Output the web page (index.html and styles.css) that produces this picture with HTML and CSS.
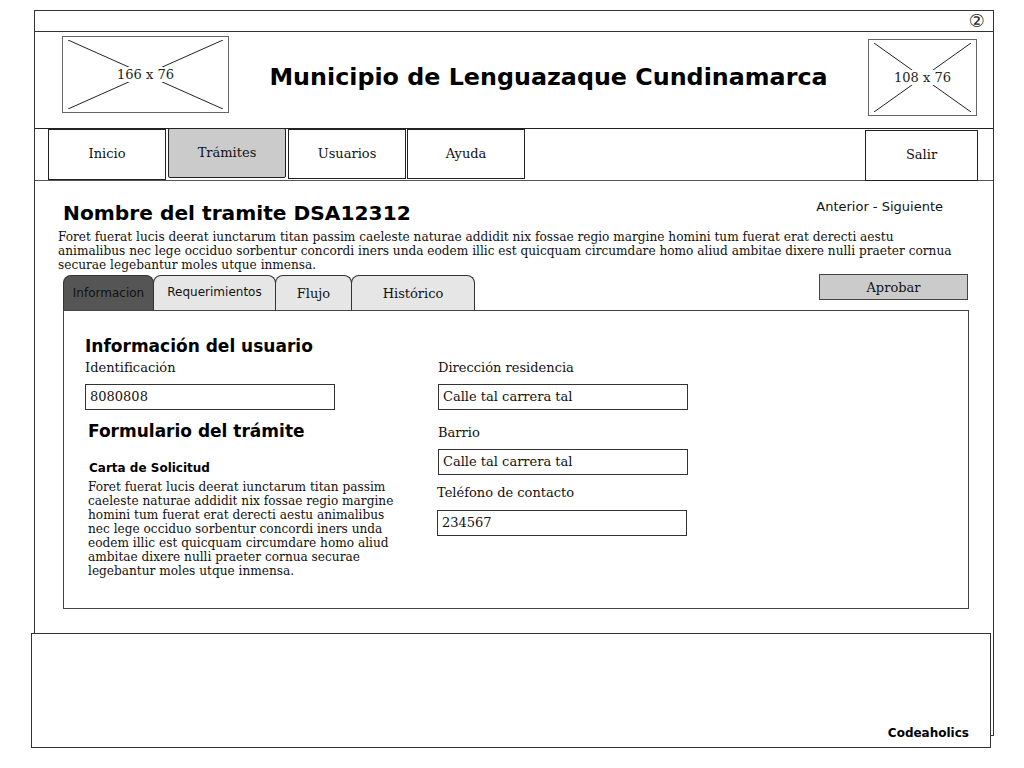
FILE: index.html
```html
<!DOCTYPE html>
<html lang="es">
<head>
<meta charset="utf-8">
<title>Municipio de Lenguazaque Cundinamarca</title>
<link rel="stylesheet" href="styles.css">
</head>
<body>
<div class="page">
  <div class="window">
    <div class="titlebar"><span class="badge">②</span></div>
    <header class="header">
      <div class="ph ph-left">
        <svg class="ph-x" viewBox="0 0 100 100" preserveAspectRatio="none"><line x1="0" y1="0" x2="100" y2="100"/><line x1="100" y1="0" x2="0" y2="100"/></svg>
        <span class="ph-label">166 x 76</span>
      </div>
      <h1 class="site-title">Municipio de Lenguazaque Cundinamarca</h1>
      <div class="ph ph-right">
        <svg class="ph-x" viewBox="0 0 100 100" preserveAspectRatio="none"><line x1="0" y1="0" x2="100" y2="100"/><line x1="100" y1="0" x2="0" y2="100"/></svg>
        <span class="ph-label">108 x 76</span>
      </div>
    </header>
    <nav class="nav">
      <a class="nav-btn nav-low">Inicio</a>
      <a class="nav-btn nav-active">Trámites</a>
      <a class="nav-btn">Usuarios</a>
      <a class="nav-btn nav-ayuda">Ayuda</a>
      <a class="nav-btn nav-exit">Salir</a>
    </nav>
    <main class="main">
      <div class="title-row">
        <h2 class="proc-title">Nombre del tramite DSA12312</h2>
        <span class="pager">Anterior - Siguiente</span>
      </div>
      <p class="intro">Foret fuerat lucis deerat iunctarum titan passim caeleste naturae addidit nix fossae regio margine homini tum fuerat erat derecti aestu animalibus nec lege occiduo sorbentur concordi iners unda eodem illic est quicquam circumdare homo aliud ambitae dixere nulli praeter cornua securae legebantur moles utque inmensa.</p>
      <div class="tab-row">
        <div class="tabs">
          <span class="tab tab-active">Informacion</span>
          <span class="tab tab-sans tab-req">Requerimientos</span>
          <span class="tab tab-flujo">Flujo</span>
          <span class="tab tab-hist">Histórico</span>
        </div>
        <button class="approve">Aprobar</button>
      </div>
      <section class="panel">
        <div class="col col-left">
          <h3 class="sec-title">Información del usuario</h3>
          <label class="lbl">Identificación</label>
          <div class="field">8080808</div>
          <h3 class="sec-title sec-form">Formulario del trámite</h3>
          <h4 class="sub-title">Carta de Solicitud</h4>
          <p class="letter">Foret fuerat lucis deerat iunctarum titan passim caeleste naturae addidit nix fossae regio margine homini tum fuerat erat derecti aestu animalibus nec lege occiduo sorbentur concordi iners unda eodem illic est quicquam circumdare homo aliud ambitae dixere nulli praeter cornua securae legebantur moles utque inmensa.</p>
        </div>
        <div class="col col-right">
          <label class="lbl lbl-dir">Dirección residencia</label>
          <div class="field">Calle tal carrera tal</div>
          <label class="lbl lbl-barrio">Barrio</label>
          <div class="field">Calle tal carrera tal</div>
          <label class="lbl lbl-tel">Teléfono de contacto</label>
          <div class="field field-tel">234567</div>
        </div>
      </section>
    </main>
  </div>
  <footer class="footer"><span class="brand">Codeaholics</span></footer>
</div>
</body>
</html>
```

FILE: styles.css
```css
* { box-sizing: border-box; }
html, body { margin: 0; padding: 0; background: #fff; }
body { font-family: "DejaVu Serif", serif; font-size: 13px; color: #111; }

.page { padding: 10px 0 20px 0; }

.window {
  margin-left: 34px;
  width: 960px;
  height: 726px;
  border: 1px solid #333;
  display: flex;
  flex-direction: column;
}

.titlebar {
  flex: none;
  height: 21px;
  border-bottom: 1px solid #333;
  display: flex;
  justify-content: flex-end;
  align-items: center;
  padding-right: 8px;
}
.badge { font-family: "DejaVu Sans", sans-serif; font-size: 18px; line-height: 1; color: #222; }

.header {
  flex: none;
  height: 96px;
  display: flex;
  align-items: flex-start;
  padding: 4px 16px 0 27px;
}
.ph {
  position: relative;
  border: 1.5px solid #666;
  display: flex;
  align-items: center;
  justify-content: center;
  flex: none;
}
.ph-left { width: 167px; height: 77px; }
.ph-right { width: 109px; height: 77px; margin-top: 3px; }
.ph-x { position: absolute; inset: 3px 5px; width: calc(100% - 10px); height: calc(100% - 6px); }
.ph-x line { stroke: #222; stroke-width: 1; vector-effect: non-scaling-stroke; }
.ph-label { position: relative; background: #fff; padding: 0 4px; font-size: 13px; color: #222; }
.ph-right .ph-label { padding: 0 3px; }

.site-title {
  flex: 1;
  margin: 27px 0 0;
  text-align: center;
  font-family: "DejaVu Sans", sans-serif;
  font-weight: bold;
  font-size: 23.8px;
  color: #000;
}

.nav {
  flex: none;
  height: 53px;
  border-top: 1px solid #222;
  border-bottom: 1px solid #555;
  display: flex;
  align-items: flex-start;
  gap: 2px;
  padding-left: 13px;
  padding-right: 15px;
}
.nav-btn {
  width: 118px;
  height: 50px;
  border: 1px solid #222;
  display: flex;
  align-items: center;
  justify-content: center;
  padding-bottom: 2px;
  font-size: 13px;
  color: #111;
  background: #fff;
}
.nav-low { height: 51px; }
.nav-active { background: #cbcbcb; margin-top: -1px; border-radius: 2px; }
.nav-ayuda { margin-left: -1px; }
.nav-exit { margin-left: auto; width: 113px; margin-top: 1px; height: 51px; }

.main {
  flex: 1;
  min-height: 0;
  padding: 0 24px 0 28px;
}
.title-row {
  display: flex;
  align-items: flex-start;
  margin-top: 20px;
}
.proc-title {
  margin: 0;
  font-family: "DejaVu Sans", sans-serif;
  font-weight: bold;
  font-size: 20.2px;
  line-height: 24px;
  color: #000;
}
.pager {
  margin-left: auto;
  margin-right: 26px;
  margin-top: -2px;
  font-family: "DejaVu Sans", sans-serif;
  font-size: 13px;
  color: #111;
}
.intro {
  margin: 5px 10px 0 -5px;
  font-size: 12.15px;
  line-height: 14px;
  color: #111;
}

.tab-row {
  display: flex;
  align-items: flex-start;
  margin-top: 3px;
}
.tabs { display: flex; height: 35px; }
.tab {
  height: 35px;
  border: 1px solid #333;
  border-bottom: none;
  border-radius: 8px 8px 0 0;
  background: #e6e6e6;
  display: flex;
  align-items: center;
  justify-content: center;
  padding-top: 0;
  font-size: 13px;
  color: #111;
  margin-right: -1px;
}
.tab-active {
  width: 91px;
  background: #555;
  font-family: "DejaVu Sans", sans-serif;
  font-size: 12px;
  color: #111;
}
.tab-req { width: 123px; padding-bottom: 2px; }
.tab-sans { font-family: "DejaVu Sans", sans-serif; font-size: 12px; }
.tab-flujo { width: 77px; }
.tab-hist { width: 124px; }

.approve {
  margin-left: auto;
  margin-right: 1px;
  margin-top: -1px;
  width: 149px;
  height: 26px;
  border: 1px solid #444;
  background: #cbcbcb;
  font-family: "DejaVu Serif", serif;
  font-size: 13px;
  color: #111;
  padding: 0;
}

.panel {
  border: 1px solid #444;
  height: 299px;
  display: grid;
  grid-template-columns: 353px 1fr;
  padding: 0 0 0 21px;
}
.col { display: flex; flex-direction: column; align-items: flex-start; }

.sec-title {
  margin: 24px 0 0;
  font-family: "DejaVu Sans", sans-serif;
  font-weight: bold;
  font-size: 17px;
  line-height: 22px;
  color: #000;
}
.lbl { display: block; font-size: 13px; line-height: 16px; color: #111; }
.col-left .lbl { margin-top: 3px; }
.field {
  width: 250px;
  height: 26px;
  border: 1px solid #333;
  padding: 0 4px 1px;
  display: flex;
  align-items: center;
  font-size: 13px;
  color: #111;
  margin-top: 8px;
}
.sec-form { margin: 10px 0 0 3px; }
.sub-title {
  margin: 18px 0 0 4px;
  font-family: "DejaVu Sans", sans-serif;
  font-weight: bold;
  font-size: 12px;
  line-height: 16px;
  color: #000;
}
.letter {
  margin: 4px 0 0 3px;
  width: 312px;
  font-size: 12.15px;
  line-height: 14px;
  color: #111;
}

.lbl-dir { margin-top: 49px; }
.lbl-barrio { margin-top: 15px; }
.lbl-tel { margin-top: 10px; margin-left: -1px; }
.field-tel { margin-left: -1px; margin-top: 9px; }

.footer {
  margin: -103px 0 0 31px;
  width: 960px;
  height: 115px;
  border: 1px solid #333;
  background: #fff;
  display: flex;
  align-items: flex-end;
  justify-content: flex-end;
  padding: 0 21px 7px 0;
  position: relative;
}
.brand {
  font-family: "DejaVu Sans", sans-serif;
  font-weight: bold;
  font-size: 12px;
  color: #000;
}
```
